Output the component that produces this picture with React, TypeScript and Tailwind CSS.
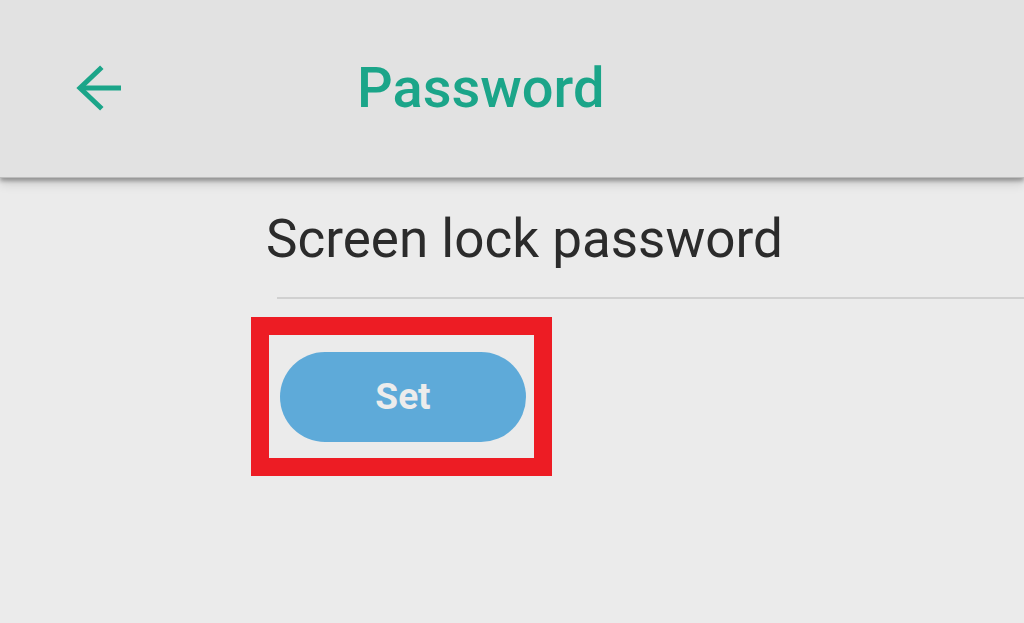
import React from 'react';

const font = { fontFamily: 'Roboto, "Noto Sans", sans-serif' };

export default function App() {
  return (
    <div className="w-[1024px] h-[623px] bg-[#ebebeb] overflow-hidden flex flex-col" style={font}>
      {/* App bar */}
      <header className="relative h-[178px] shrink-0 bg-[#e2e2e2] border-b border-[#bdbdbd] shadow-[0_3px_4px_rgba(0,0,0,0.3),0_6px_10px_rgba(0,0,0,0.12)] z-10 flex items-center">
        <button className="ml-[75px] w-[48px] h-[48px] flex items-center justify-center text-[#1ba589]" aria-label="Back">
          <svg width="48" height="48" viewBox="0 0 48 48" fill="none" stroke="currentColor" strokeWidth="5">
            <path d="M5 23H46" strokeLinecap="butt" />
            <path d="M25 4L5 23L25 42" strokeLinecap="square" strokeLinejoin="miter" />
          </svg>
        </button>
        <h1 className="ml-[234px] text-[#1ba589] text-[56px] font-medium leading-none -mt-[2px]">Password</h1>
      </header>

      {/* Content */}
      <main className="flex-1 flex flex-col">
        <div className="pl-[266px] pt-[35px]">
          <p className="text-[#2b2b2b] text-[53px] leading-none">Screen lock password</p>
        </div>
        <div className="ml-[277px] mt-[31px] h-[2px] bg-[#d0d0d0]" />
        <div className="ml-[251px] mt-[18px] w-[301px] h-[159px] border-[18px] border-[#ed1c24] flex items-center pl-[11px]">
          <button className="w-[246px] h-[90px] rounded-full bg-[#5eaad9] text-[#ececec] text-[37px] font-bold flex items-center justify-center">
            Set
          </button>
        </div>
      </main>
    </div>
  );
}
